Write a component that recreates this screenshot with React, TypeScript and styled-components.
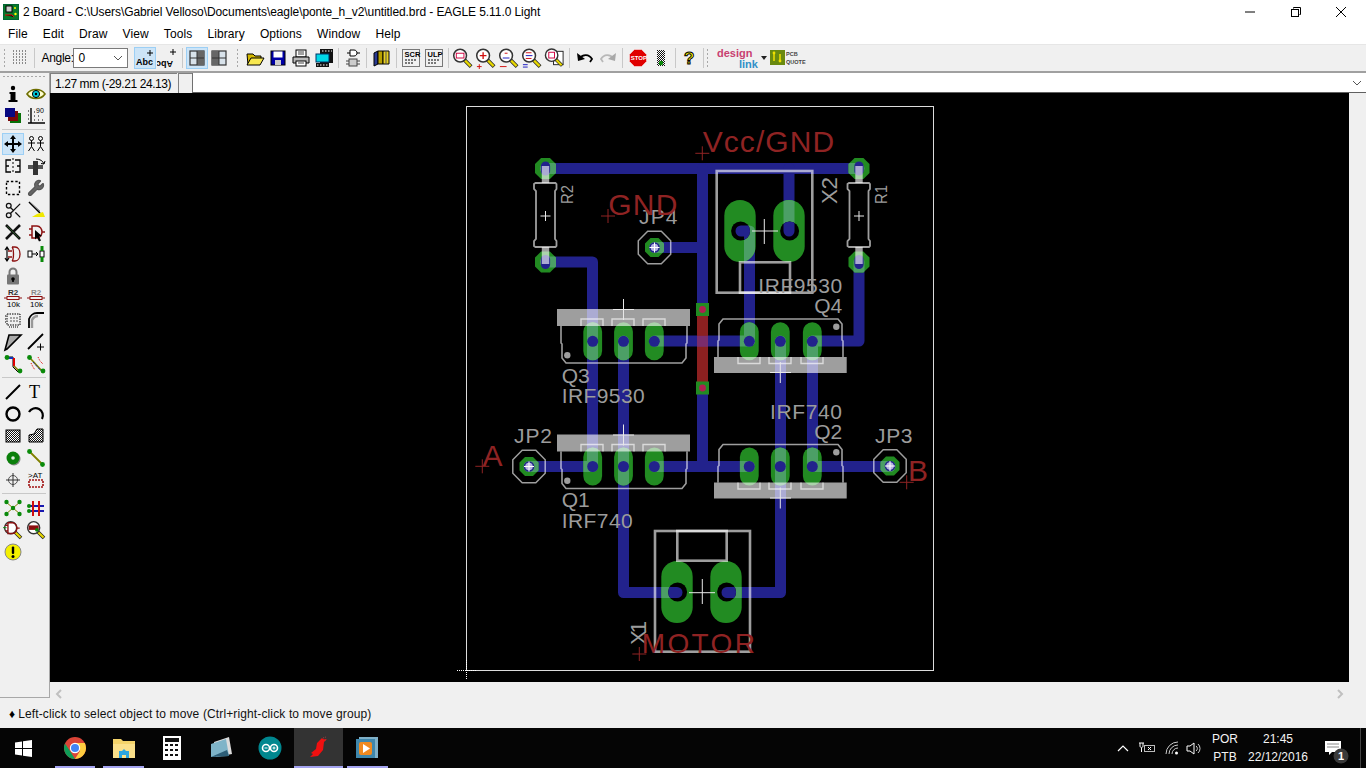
import React from 'react'
import styled, { createGlobalStyle } from 'styled-components'
import { Scissors, Wrench } from 'lucide-react'

const GlobalStyle = createGlobalStyle`
    html, body { margin: 0; padding: 0; background: #f0f0f0; overflow: hidden; }
    * { box-sizing: border-box; }
`

const UI_FONT = `"Liberation Sans", "Noto Sans", sans-serif`

const Window = styled.div`
    width: 1366px;
    height: 768px;
    display: flex;
    flex-direction: column;
    font-family: ${UI_FONT};
    font-size: 12px;
    color: #000;
    overflow: hidden;
`

const TitleBar = styled.div`
    height: 23px;
    background: #fff;
    display: flex;
    align-items: center;
    padding-left: 3px;
`

const TitleText = styled.span`
    margin-left: 4px;
    letter-spacing: -0.08px;
    white-space: nowrap;
    flex: 1;
`

const WindowControls = styled.div`
    display: flex;
    width: 122px;
    gap: 33.5px;
`

const MenuBar = styled.div`
    height: 21px;
    background: #fff;
    display: flex;
    align-items: center;
    padding-left: 8px;
    gap: 15.1px;
`

const MenuItem = styled.span`
    letter-spacing: 0.1px;
`

const Toolbar = styled.div`
    height: 29px;
    background: #f0f0f0;
    border-top: 1px solid #e6e6e6;
    border-bottom: 2px solid #a0a0a0;
    display: flex;
    align-items: center;
    padding-left: 3px;
`

const Grip = styled.div<{ $left?: number }>`
    width: 3px;
    height: 20px;
    margin-left: ${p => p.$left ?? 0}px;
    margin-right: 2px;
    background-image: radial-gradient(#a8a8a8 0.8px, transparent 1px);
    background-size: 3px 4px;
`

const ToolButton = styled.div<{ $active?: boolean; $w?: number }>`
    width: ${p => p.$w ?? 23}px;
    height: 22px;
    flex: none;
    display: flex;
    align-items: center;
    justify-content: center;
    background: ${p => (p.$active ? '#cce4f7' : 'transparent')};
    border: 1px solid ${p => (p.$active ? '#9ccff5' : 'transparent')};
`

const Sep = styled.div<{ $l?: number; $r?: number }>`
    width: 1px;
    height: 20px;
    flex: none;
    background: #c8c8c8;
    margin: 0 ${p => p.$r ?? 2.3}px 0 ${p => p.$l ?? 2.3}px;
`

const Spacer = styled.div<{ $w: number }>`
    width: ${p => p.$w}px;
    flex: none;
`

const AngleLabel = styled.span`
    width: 31px;
    letter-spacing: -0.3px;
    white-space: nowrap;
`

const Combo = styled.div`
    width: 55px;
    height: 20px;
    background: #fff;
    border: 1px solid #7a7a7a;
    display: flex;
    align-items: center;
    justify-content: space-between;
    padding: 0 4px 0 5px;
    margin-right: 6px;
`

const Workspace = styled.div`
    height: 632px;
    display: flex;
`

const Dock = styled.div`
    width: 50px;
    height: 625px;
    background: #f0f0f0;
    border-right: 1px solid #a8a8a8;
    border-bottom: 1px solid #a8a8a8;
    padding: 2px 0 0 2px;
    flex: none;
`

const DockGrip = styled.div`
    height: 3px;
    width: 44px;
    margin-bottom: 5px;
    background-image: radial-gradient(#a8a8a8 0.8px, transparent 1px);
    background-size: 4px 3px;
`

const ToolGrid = styled.div`
    display: grid;
    grid-template-columns: 22px 22px;
    grid-auto-rows: 22px;
    column-gap: 1px;
`

const DockRule = styled.div`
    height: 1px;
    width: 44px;
    background: #c8c8c8;
    margin: 2px 0 3px;
`

const Main = styled.div`
    flex: 1;
    display: flex;
    flex-direction: column;
    min-width: 0;
`

const CoordRow = styled.div`
    height: 20px;
    display: flex;
    background: #f0f0f0;
`

const CoordBox = styled.div`
    width: 127px;
    padding-left: 4px;
    display: flex;
    align-items: center;
    white-space: nowrap;
    letter-spacing: -0.42px;
    border-top: 1px solid #808080;
    border-left: 1px solid #808080;
`

const SmallBox = styled.div`
    width: 14px;
    margin-left: 1px;
    border-top: 1px solid #808080;
    border-left: 1px solid #808080;
`

const CommandField = styled.div`
    flex: 1;
    background: #fff;
    border-left: 1px solid #707070;
    border-bottom: 1px solid #606060;
    display: flex;
    align-items: center;
    justify-content: flex-end;
    padding-right: 3px;
`

const CanvasRow = styled.div`
    height: 589px;
    display: flex;
`

const Gutter = styled.div`
    width: 17px;
    background: #f0f0f0;
`

const Board = styled.svg`
    display: block;
    width: 1299px;
    height: 589px;
    background: #000;
    flex: none;
`

const HScroll = styled.div`
    height: 23px;
    width: 1299px;
    display: flex;
    justify-content: space-between;
    align-items: center;
    padding: 0 4px;
`

const StatusBar = styled.div`
    height: 23px;
    background: #f0f0f0;
    display: flex;
    align-items: center;
    padding: 0 0 5px 9px;
    gap: 3px;
`

const StatusText = styled.span`
    letter-spacing: 0.13px;
    color: #101010;
`

const Taskbar = styled.div`
    height: 40px;
    background: #050505;
    display: flex;
    align-items: center;
    color: #fff;
`

const StartButton = styled.div`
    width: 50.7px;
    height: 40px;
    display: flex;
    align-items: center;
    justify-content: center;
    padding-right: 4px;
`

const TaskIcon = styled.div<{ $open?: boolean; $active?: boolean }>`
    width: 48.7px;
    height: 40px;
    position: relative;
    display: flex;
    align-items: center;
    justify-content: center;
    background: ${p => (p.$active ? '#333' : 'transparent')};
    &::after {
        content: '';
        display: ${p => (p.$open ? 'block' : 'none')};
        position: absolute;
        left: ${p => (p.$active ? 0 : 4)}px;
        right: ${p => (p.$active ? 0 : 4)}px;
        bottom: 0;
        height: 2px;
        background: #a4a4f0;
    }
`

const Tray = styled.div`
    margin-left: auto;
    display: flex;
    align-items: center;
    height: 40px;
    padding-right: 5px;
`

const TrayIcons = styled.div`
    display: flex;
    align-items: center;
    margin-right: 6px;
`

const TrayText = styled.div<{ $w: number; $left?: number }>`
    width: ${p => p.$w}px;
    margin-left: ${p => p.$left ?? 0}px;
    display: flex;
    flex-direction: column;
    align-items: center;
    line-height: 18px;
    font-size: 12px;
    color: #f4f4f4;
`

const Notify = styled.div`
    width: 40px;
    height: 40px;
    margin-left: 8px;
    padding-top: 4px;
    border-right: 1px solid #444;
    display: flex;
    align-items: center;
`

const Label = styled.text<{ $size?: number }>`
    font-family: "Liberation Sans", sans-serif;
    font-size: ${p => p.$size ?? 21}px;
    fill: #9c9c9c;
`

const RedLabel = styled.text<{ $size?: number }>`
    font-family: "Liberation Sans", sans-serif;
    font-size: ${p => p.$size ?? 30}px;
    fill: #8f2323;
`

const IconText = styled.text<{ $size?: number; $fill?: string; $weight?: number; $serif?: boolean }>`
    font-family: ${p => (p.$serif ? '"Liberation Serif", serif' : '"Liberation Sans", sans-serif')};
    font-size: ${p => p.$size ?? 7}px;
    font-weight: ${p => p.$weight ?? 700};
    fill: ${p => p.$fill ?? '#000'};
`

const Ico = ({ children, s = 20, w }: { children: React.ReactNode; s?: number; w?: number }) => (
    <svg width={w ?? s} height={s} viewBox={`0 0 ${w ?? s} ${s}`}>{children}</svg>
)

const Checker = ({ id }: { id: string }) => (
    <defs>
        <pattern id={id} width="2" height="2" patternUnits="userSpaceOnUse">
            <rect width="2" height="2" fill="#fff" />
            <rect width="1" height="1" fill="#111" />
            <rect x="1" y="1" width="1" height="1" fill="#111" />
        </pattern>
    </defs>
)

// magnifier shared by the zoom buttons
const Mag = ({ children, s = 22 }: { children?: React.ReactNode; s?: number }) => (
    <Ico s={s}>
        <g transform={s === 22 ? '' : 'scale(0.9)'}>
            <path d="M13 13L20 20" stroke="#222" strokeWidth="4" />
            <path d="M13.5 13.5L19.5 19.5" stroke="#e8d800" strokeWidth="2.4" />
            <circle cx="8.5" cy="8.5" r="6.7" fill="#fff" stroke="#333" strokeWidth="1.6" />
            {children}
        </g>
    </Ico>
)

const Gate = ({ x = 0, y = 0, color = '#8c1010' }: { x?: number; y?: number; color?: string }) => (
    <path transform={`translate(${x} ${y})`} d="M4 3h5c3 0 5 3 5 6s-2 6-5 6H4zM1 6h3M1 12h3M14 9h3" fill="none" stroke={color} strokeWidth="1.5" />
)

const dock: React.ReactNode[][] = [
    [
        <Ico><circle cx="10" cy="4" r="2.2" /><path d="M6.5 8h6v8h2v2h-9v-2h2v-6h-1z" /></Ico>,
        <Ico><path d="M1 10C5 4 15 4 19 10 15 16 5 16 1 10z" fill="#ffffd0" stroke="#6e6e00" strokeWidth="1.6" /><circle cx="10" cy="10" r="3.6" fill="#00c8d8" stroke="#000" /><circle cx="10" cy="10" r="1.2" /></Ico>,
        <Ico><rect x="7" y="7" width="11" height="10" fill="#087008" /><rect x="5" y="5" width="10" height="10" fill="#7a0808" /><rect x="2" y="2" width="10" height="9" fill="#080880" /></Ico>,
        <Ico><path d="M5 2v15M2 17h17" stroke="#000" strokeWidth="1.4" /><path d="M8 14h2M12 14h2M16 14h2M8 10h2M12 10h2M8 6h2M2 13h2M2 9h2M2 5h2" stroke="#000" strokeDasharray="1 1" /><IconText x="10" y="7" $size={7} $weight={400}>90</IconText></Ico>,
    ],
    [
        <Ico><path d="M10 1l3 4h-2v4h4V7l4 3-4 3v-2h-4v4h2l-3 4-3-4h2v-4H5v2l-4-3 4-3v2h4V5H7z" /></Ico>,
        <Ico><g fill="none" stroke="#000"><circle cx="5.5" cy="4.5" r="2" /><path d="M5.5 6.5v6M2 9h7M2.5 17l3-4.5 3 4.5" /><circle cx="14.5" cy="4.5" r="2" /><path d="M14.5 6.5v6M11 9h7M11.5 17l3-4.5 3 4.5" /></g></Ico>,
        <Ico><path d="M8 4H3v12h5M3 10h3M12 4h5v12h-5M17 10h-3" fill="none" stroke="#000" strokeWidth="1.3" /><path d="M10 2v16" stroke="#000" strokeDasharray="2 2" /></Ico>,
        <Ico><rect x="2" y="9" width="15" height="4" fill="#555" /><rect x="7" y="5" width="5" height="14" fill="#333" /><path d="M10 3c4 0 7 2 8 5M18 8l-3-.5M18 8l1-3" fill="none" stroke="#000" strokeWidth="1" /></Ico>,
        <Ico><rect x="3.5" y="3.5" width="13" height="13" fill="none" stroke="#000" strokeWidth="1.4" strokeDasharray="2.4 2" /></Ico>,
        <Wrench size={18} fill="#666" color="#555" strokeWidth={1.6} />,
        <Scissors size={19} color="#111" strokeWidth={1.6} />,
        <Ico><path d="M3 2l11 11" stroke="#000" strokeWidth="1.6" /><path d="M4 2l10 9" stroke="#888" /><path d="M11 14l6-2 2 5H6z" fill="#f0e800" /></Ico>,
        <Ico><path d="M3 3l14 14M17 3L3 17" stroke="#101010" strokeWidth="2.6" /><path d="M4 4l12 12" stroke="#245024" /></Ico>,
        <Ico><Gate x={2} y={1} /><path d="M9 8l7 6-3 .5 2 4-2 1-2-4-2 2z" fill="#000" /></Ico>,
        <Ico><path d="M4 4v12M2 6l2-3 2 3M2 14l2 3 2-3" fill="none" stroke="#000" strokeWidth="1.2" /><path d="M9 3h3c3 0 5 3 5 7s-2 7-5 7H9M9 3c2 2 2 12 0 14M5 7h4M5 13h4" fill="none" stroke="#8c1010" strokeWidth="1.3" /></Ico>,
        <Ico><rect x="2" y="7" width="4" height="6" fill="#fff" stroke="#000" /><rect x="14" y="7" width="4" height="6" fill="#fff" stroke="#000" /><path d="M6 10h6M10 8l2 2-2 2" fill="none" stroke="#000" /><path d="M16 2v5M16 13v5" stroke="#0a8a0a" strokeWidth="3" /></Ico>,
        <Ico><path d="M6.5 9V6a3.5 3.5 0 017 0v3" fill="none" stroke="#777" strokeWidth="2" /><rect x="4" y="8.5" width="12" height="10" rx="1" fill="#777" /><circle cx="10" cy="13" r="1.8" /><rect x="9.2" y="13" width="1.6" height="3" /></Ico>,
        null,
        <Ico><IconText x="5" y="7" $size={8} $fill="#333">R2</IconText><path d="M1 10h3M16 10h3" stroke="#8c1010" /><rect x="4" y="8.5" width="12" height="3" fill="none" stroke="#8c1010" /><IconText x="4" y="19" $size={8} $weight={400}>10k</IconText></Ico>,
        <Ico><IconText x="5" y="7" $size={8} $fill="#888">R2</IconText><path d="M1 10h3M16 10h3" stroke="#8c1010" /><rect x="4" y="8.5" width="12" height="3" fill="none" stroke="#8c1010" /><IconText x="4" y="19" $size={8} $weight={400}>10k</IconText></Ico>,
        <Ico><rect x="4" y="4" width="13" height="11" fill="none" stroke="#000" strokeDasharray="1.5 1" /><path d="M2 6h2M2 9h2M2 12h2M6 17h9" stroke="#000" strokeDasharray="1 1" /><path d="M7 8h8M7 11h8" stroke="#555" strokeDasharray="2 1" /></Ico>,
        <Ico><path d="M3 18V9c1-3 4-6 8-6h7" fill="none" stroke="#000" strokeWidth="1.8" /><path d="M6 18V10c1-2 3-4 6-4" fill="none" stroke="#999" strokeWidth="2.4" /></Ico>,
    ],
    [
        <Ico><path d="M2 18L6 3h12L4 17z" fill="#aaa" stroke="#000" strokeWidth="1.6" /></Ico>,
        <Ico><path d="M2 17L17 2" stroke="#000" strokeWidth="1.8" /><path d="M11 15h7M14.5 11.5v7" stroke="#000" /></Ico>,
    ],
    [
        <Ico><path d="M4 3h6v10l5 5" fill="none" stroke="#000" /><path d="M4 4h6" stroke="#1030c0" strokeWidth="2" /><path d="M11 4v8" stroke="#e00000" strokeWidth="2" /><path d="M11 12l5 5" stroke="#808000" strokeWidth="1.6" /><circle cx="4" cy="3.5" r="2.4" fill="#0a8a0a" /><circle cx="17" cy="17" r="2.4" fill="#0a8a0a" /></Ico>,
        <Ico><path d="M4 4l12 13" stroke="#808000" strokeWidth="1.6" /><path d="M5 9l2 4 2 3M12 3l2 4 3 3" stroke="#e00000" strokeDasharray="1 1" fill="none" /><path d="M7 8l8 9" stroke="#0000c0" strokeDasharray="1 1" /><circle cx="3.5" cy="3.5" r="2.4" fill="#0a8a0a" /><circle cx="17" cy="17" r="2.4" fill="#0a8a0a" /></Ico>,
    ],
    [
        <Ico><path d="M3 17L17 3" stroke="#000" strokeWidth="2" /></Ico>,
        <Ico><IconText x="3" y="16" $size={18} $weight={400} $serif>T</IconText></Ico>,
        <Ico><circle cx="10" cy="10" r="6.5" fill="none" stroke="#000" strokeWidth="2.4" /></Ico>,
        <Ico><path d="M3 8a7 7 0 1113 7" fill="none" stroke="#000" strokeWidth="2.2" /></Ico>,
        <Ico><Checker id="hatch-a" /><rect x="3" y="4" width="14" height="12" fill="url(#hatch-a)" stroke="#000" /></Ico>,
        <Ico><Checker id="hatch-b" /><path d="M3 16V9l5-1 3-5h6v13z" fill="url(#hatch-b)" stroke="#000" /></Ico>,
        <Ico><circle cx="11" cy="11" r="6.5" fill="#888" /><circle cx="10" cy="10" r="6.5" fill="#0a7f0a" /><circle cx="10" cy="10" r="1.8" fill="#ddeedd" /></Ico>,
        <Ico><path d="M4 4l12 12" stroke="#808000" strokeWidth="1.8" /><circle cx="3.5" cy="3.5" r="2.4" fill="#0a8a0a" /><circle cx="16.5" cy="16.5" r="2.4" fill="#0a8a0a" /></Ico>,
        <Ico><circle cx="10" cy="10" r="4.5" fill="none" stroke="#555" /><path d="M10 3v14M3 10h14" stroke="#333" /></Ico>,
        <Ico><IconText x="2" y="8" $size={8} $weight={400}>&gt;AT</IconText><rect x="3" y="10" width="14" height="7" fill="none" stroke="#a01010" strokeWidth="1.6" strokeDasharray="2 1" /></Ico>,
    ],
    [
        <Ico><path d="M3 4l14 12M17 4L3 16" stroke="#808000" /><circle cx="3.5" cy="4" r="2.2" fill="#0a8a0a" /><circle cx="16.5" cy="4" r="2.2" fill="#0a8a0a" /><circle cx="3.5" cy="16" r="2.2" fill="#0a8a0a" /><circle cx="16.5" cy="16" r="2.2" fill="#0a8a0a" /><circle cx="10" cy="10" r="2.2" fill="#0a8a0a" /></Ico>,
        <Ico><path d="M2 8h16M2 13h16" stroke="#1818b0" strokeWidth="2" /><path d="M7 3v15M13 3v15" stroke="#d01010" strokeWidth="2" /><circle cx="3" cy="8" r="2" fill="#0a8a0a" /><circle cx="3" cy="13" r="2" fill="#0a8a0a" /></Ico>,
        <Mag s={20}><Gate x={1.5} y={0} /><path d="M0 8.5h4" stroke="#0a8a0a" /></Mag>,
        <Mag s={20}><rect x="3" y="6" width="11" height="5" fill="#8c1010" /><circle cx="12" cy="11" r="2" fill="#0a8a0a" /></Mag>,
        <Ico><circle cx="10" cy="10" r="8" fill="#f4f000" stroke="#888" /><rect x="8.8" y="4.5" width="2.4" height="7.5" rx="1" /><circle cx="10" cy="14.5" r="1.5" /></Ico>,
        null,
    ],
]

const Layout = ({ flip }: { flip?: boolean }) => (
    <Ico s={18}>
        <rect x="2" y="2" width="14" height="14" fill="#d8e2ea" stroke="#333" strokeWidth="1.2" />
        <rect x={flip ? 2 : 9} y="2" width="7" height="14" fill="#666" />
        <path d="M9 2v14M2 9h14" stroke="#333" />
    </Ico>
)

const Trace = ({ color }: { color: string }) => (
    <g fill="none" stroke={color} strokeWidth="11" strokeLinecap="round" strokeLinejoin="round">
        {TRACES.map(d => <path key={d} d={d} />)}
    </g>
)

const TRACES = [
    'M545.5 168.5H859',
    'M702.5 168.5V309.5',
    'M702.5 388V466.5',
    'M654.5 247.5H702.5',
    'M545.5 262H592.5V466.5',
    'M623.5 341V592.5H677',
    'M780.5 341V592.5H727',
    'M812.5 341V466.5',
    'M654.5 341H749.5',
    'M812.5 341H859V262',
    'M529 466.5H592.5',
    'M654.5 466.5H749.5',
    'M812.5 466.5H890',
    'M789 168.5V231',
    'M749.5 341V231H741',
]

const octagon = (cx: number, cy: number, r: number) => {
    const k = r * 0.42
    return [[-k, -r], [k, -r], [r, -k], [r, k], [k, r], [-k, r], [-r, k], [-r, -k]]
        .map(([x, y]) => `${cx + x},${cy + y}`).join(' ')
}

const RES_PADS = [[545.5, 168.5], [545.5, 262], [859, 168.5], [859, 262]]
const JP_PADS = [[654.5, 247.5], [529, 466.5], [890, 466]]
const PIN_X = [592.7, 623.5, 654.3, 749.3, 780.3, 812.3]
const PIN_Y = [341.3, 466.5]
const TERMINALS = [[740, 231], [789, 231], [677, 592], [726, 592]]
const VIAS = [309.5, 388]

const PadShapes = () => (
    <>
        {RES_PADS.map(([x, y]) => <polygon key={`${x}${y}`} points={octagon(x, y, 10.5)} />)}
        {JP_PADS.map(([x, y]) => <polygon key={`${x}${y}`} points={octagon(x, y, 9.5)} />)}
        {PIN_Y.map(y => PIN_X.map(x => <rect key={`${x}${y}`} x={x - 9.4} y={y - 19} width="18.8" height="38" rx="9.4" />))}
        {TERMINALS.map(([x, y]) => <rect key={`${x}${y}`} x={x - 15.7} y={y - 31} width="31.4" height="62" rx="15.7" />)}
    </>
)

const PACKAGE = 'rgba(255,255,255,0.62)'

const Mosfet = ({ dy, flipped }: { dy: number; flipped?: boolean }) => (
    <g transform={`translate(0 ${dy})`}>
        {flipped ? (
            <>
                <rect x="714" y="357" width="132.7" height="16" fill={PACKAGE} />
                <path d="M718 357V341l1-1V324l4-5H838l4 5V340l1 1V357" fill="none" stroke={PACKAGE} strokeWidth="1.6" />
                {[738, 769, 801].map(x => <path key={x} d={`M${x} 357v6.5h22V357`} fill="none" stroke={PACKAGE} strokeWidth="1.4" />)}
                <circle cx="836.3" cy="326.7" r="3.2" fill={PACKAGE} />
                <path d="M770 372.5h21M780.3 362v21" stroke="#e8e8e8" />
            </>
        ) : (
            <>
                <rect x="557" y="309" width="133" height="17" fill={PACKAGE} />
                <path d="M561 326V343l1 1V358l4 5H682l4-5V344l1-1V326" fill="none" stroke={PACKAGE} strokeWidth="1.6" />
                {[581, 612, 643].map(x => <path key={x} d={`M${x} 326v-7h22v7`} fill="none" stroke={PACKAGE} strokeWidth="1.4" />)}
                <circle cx="567.3" cy="355.3" r="3.2" fill={PACKAGE} />
                <path d="M613 309.5h21M623.5 299v21" stroke="#e8e8e8" />
            </>
        )}
    </g>
)

const Resistor = ({ x }: { x: number }) => (
    <g>
        <path d={`M${x - 3.7} 166h7.4v17h-7.4zM${x - 3.7} 247h7.4v17h-7.4z`} fill={PACKAGE} />
        <path
            d={`M${x - 10} 183h20l1 1v5l-1.5 2v48l1.5 2v5l-1 1h-20l-1.5-1v-5l2-2v-48l-2-2v-5z`}
            fill="none"
            stroke={PACKAGE}
            strokeWidth="1.8"
        />
        <path d={`M${x - 5} 216h10M${x} 211v10`} stroke="#e8e8e8" />
    </g>
)

const Header = ({ x, y }: { x: number; y: number }) => (
    <g>
        <polygon points={octagon(x, y, 16.2)} fill="none" stroke={PACKAGE} strokeWidth="1.5" />
        <circle cx={x} cy={y} r="5.3" fill="#22228c" />
        <circle cx={x} cy={y} r="3.8" fill="#b4b4e0" />
        <path d={`M${x - 5} ${y}h10M${x} ${y - 5}v10`} stroke="#fff" />
    </g>
)

const RedCross = ({ x, y }: { x: number; y: number }) => (
    <path d={`M${x - 7} ${y}h14M${x} ${y - 7}v14`} stroke="#8f2323" />
)

const BoardDrawing = () => (
    <Board viewBox="50 93 1299 589">
        <defs>
            <clipPath id="pad-clip"><PadShapes /></clipPath>
            <clipPath id="hole-clip">
                {TERMINALS.map(([x, y]) => <circle key={`${x}${y}`} cx={x + 0.6} cy={y} r="9.5" />)}
            </clipPath>
        </defs>

        <rect x="466.5" y="106.5" width="467" height="564" fill="none" stroke="#dcdcdc" />
        <path d="M466.5 660v20M457 670.5h20" stroke="#fff" strokeDasharray="1 1" />

        <Trace color="#22228c" />
        <rect x="697" y="309.5" width="11" height="78.5" fill="#8c2020" />
        <rect x="697" y="335.8" width="11" height="11" fill="#7b2c6c" />

        <g fill="#228b22"><PadShapes /></g>
        <g clipPath="url(#pad-clip)"><Trace color="#4c9f66" /></g>

        {VIAS.map(y => (
            <g key={y}>
                <rect x="696" y={y - 6.5} width="13" height="13" fill="#228b22" />
                <circle cx="702.5" cy={y} r="3.4" fill="#b02050" />
            </g>
        ))}

        {TERMINALS.map(([x, y]) => <circle key={`${x}${y}`} cx={x + 0.6} cy={y} r="9.5" fill="#000" />)}
        <g clipPath="url(#hole-clip)"><Trace color="#22228c" /></g>
        {PIN_Y.map(y => PIN_X.map(x => <circle key={`${x}${y}`} cx={x} cy={y} r="5.5" fill="#22228c" />))}
        {RES_PADS.map(([x, y]) => <rect key={`${x}${y}`} x={x - 4.6} y={y - 7} width="9.2" height="14" rx="4.6" fill="#22228c" />)}

        <Resistor x={545.5} />
        <Resistor x={859} />
        {JP_PADS.map(([x, y]) => <Header key={x} x={x} y={y} />)}

        <Mosfet dy={0} />
        <Mosfet dy={125.5} />
        <Mosfet dy={0} flipped />
        <Mosfet dy={125.5} flipped />

        <g fill="none" stroke={PACKAGE} strokeWidth="2.6">
            <rect x="716.7" y="171" width="95.6" height="121.7" />
            <rect x="740" y="262.3" width="50" height="30.4" />
            <rect x="655" y="531" width="95" height="120.7" />
            <rect x="677.3" y="531" width="49.4" height="29.7" />
        </g>
        <path d="M752 231h26M764.3 219v25M689 592.7h26M702.3 579v25" stroke="#e8e8e8" />

        <Label x="561.7" y="383" textLength="28">Q3</Label>
        <Label x="561.7" y="402.7" textLength="83">IRF9530</Label>
        <Label x="561.7" y="507.3" textLength="28">Q1</Label>
        <Label x="561.7" y="528.3" textLength="71">IRF740</Label>
        <Label x="514" y="443.3" textLength="38">JP2</Label>
        <Label x="639" y="224" textLength="38.5">JP4</Label>
        <Label x="875" y="443.3" textLength="37.5">JP3</Label>
        <Label x="758.3" y="292.7" textLength="84">IRF9530</Label>
        <Label x="814.3" y="312.7" textLength="28">Q4</Label>
        <Label x="770" y="419.3" textLength="72">IRF740</Label>
        <Label x="814.3" y="439" textLength="28">Q2</Label>
        <Label $size={16.5} transform="rotate(-90 573 204)" x="573" y="204" textLength="19" lengthAdjust="spacingAndGlyphs">R2</Label>
        <Label $size={16.5} transform="rotate(-90 886.7 204)" x="886.7" y="204" textLength="19" lengthAdjust="spacingAndGlyphs">R1</Label>
        <Label $size={22.5} transform="rotate(-90 836.5 204)" x="836.5" y="204" textLength="27">X2</Label>
        <Label $size={22.5} transform="rotate(-90 646 645)" x="646" y="645" textLength="24">X1</Label>

        <RedLabel x="702.7" y="152.3" textLength="131.5">Vcc/GND</RedLabel>
        <RedCross x={702.3} y={153.3} />
        <RedLabel x="608.3" y="214.7" textLength="69">GND</RedLabel>
        <RedCross x={608} y={216} />
        <RedLabel x="482.5" y="465.7" textLength="20">A</RedLabel>
        <RedCross x={482.3} y={466.3} />
        <RedLabel x="908" y="481" textLength="19">B</RedLabel>
        <RedCross x={906.7} y={482.3} />
        <RedLabel x="641.7" y="652.7" textLength="113.3" $size={28}>MOTOR</RedLabel>
        <RedCross x={639.3} y={654} />
    </Board>
)

export default function App() {
    return (
        <Window>
            <GlobalStyle />
            <TitleBar>
                <Ico s={16}>
                    <rect x="0.5" y="0.5" width="15" height="15" fill="#0a7a2a" stroke="#063" />
                    <rect x="3" y="2" width="6" height="6" fill="#ccc" stroke="#000" />
                    <circle cx="12" cy="4" r="1" fill="#ff0" />
                    <path d="M2 11h7l2 2" stroke="#e00" />
                    <circle cx="12.5" cy="10" r="1.2" fill="#ff0" />
                </Ico>
                <TitleText>2 Board - C:\Users\Gabriel Velloso\Documents\eagle\ponte_h_v2\untitled.brd - EAGLE 5.11.0 Light</TitleText>
                <WindowControls>
                    <Ico s={12}><path d="M1 6h10" stroke="#000" /></Ico>
                    <Ico s={12}><path d="M3.5 2.5v-1h7v7h-1" fill="none" stroke="#000" /><rect x="1.5" y="3.5" width="7" height="7" fill="none" stroke="#000" /></Ico>
                    <Ico s={12}><path d="M1 1l10 10M11 1L1 11" stroke="#000" /></Ico>
                </WindowControls>
            </TitleBar>

            <MenuBar>
                {['File', 'Edit', 'Draw', 'View', 'Tools', 'Library', 'Options', 'Window', 'Help'].map(m => (
                    <MenuItem key={m}>{m}</MenuItem>
                ))}
            </MenuBar>

            <Toolbar>
                <Grip />
                <ToolButton>
                    <Ico s={16}>
                        {[1, 4, 7, 10, 13].map(y => (
                            <path key={y} d={`M1 ${y}h14`} stroke="#222" strokeDasharray="1 2" />
                        ))}
                    </Ico>
                </ToolButton>
                <Sep $l={3} $r={6.5} />
                <AngleLabel>Angle:</AngleLabel>
                <Combo>
                    <span>0</span>
                    <Ico s={10}><path d="M1 3l4 4 4-4" fill="none" stroke="#555" /></Ico>
                </Combo>
                <ToolButton $active $w={22}>
                    <Ico s={20}>
                        <IconText x="1" y="17" $size={9}>Abc</IconText>
                        <path d="M12 5h6M15 2v6" stroke="#000" />
                    </Ico>
                </ToolButton>
                <ToolButton $w={23}>
                    <Ico s={20}>
                        <IconText transform="rotate(180 8 10)" x="0" y="7" $size={9}>Abc</IconText>
                        <path d="M13 4h6M16 1v6" stroke="#000" />
                    </Ico>
                </ToolButton>
                <Sep $l={3} $r={3} />
                <ToolButton $active $w={22}><Layout /></ToolButton>
                <ToolButton $w={23}><Layout flip /></ToolButton>
                <Grip $left={5} />
                <Spacer $w={3} />
                <ToolButton>
                    <Ico>
                        <path d="M2 6h6l2 2h6v3H6l-3 6z" fill="#d4b800" stroke="#000" />
                        <path d="M6 10h13l-4 7H2z" fill="#f8e850" stroke="#000" />
                    </Ico>
                </ToolButton>
                <ToolButton>
                    <Ico>
                        <rect x="3" y="3" width="14" height="14" fill="#0000a8" stroke="#000" />
                        <rect x="5.5" y="3.5" width="9" height="6" fill="#fff" />
                        <rect x="7" y="12" width="6" height="5" fill="#ccc" />
                    </Ico>
                </ToolButton>
                <ToolButton>
                    <Ico>
                        <rect x="5" y="2" width="10" height="7" fill="#fff" stroke="#000" />
                        <path d="M2 9h16v6H2z" fill="#bbb" stroke="#000" />
                        <rect x="5" y="13" width="10" height="5" fill="#fff" stroke="#000" />
                        <path d="M7 4h6M7 6h6M7 15h6" stroke="#444" />
                    </Ico>
                </ToolButton>
                <ToolButton>
                    <Ico>
                        <rect x="6" y="1" width="13" height="14" fill="#111" />
                        <rect x="2" y="6" width="13" height="8" fill="#00d8e8" stroke="#036" />
                        <rect x="2" y="15" width="13" height="4" fill="#111" />
                        <path d="M8 3h10M3 17h11" stroke="#fff" strokeDasharray="1.5 1.5" />
                    </Ico>
                </ToolButton>
                <Sep />
                <ToolButton>
                    <Ico>
                        <path d="M7 2v6h4c2 0 3-1.5 3-3s-1-3-3-3zM4 5h3M14 5h3" fill="#fff" stroke="#000" />
                        <rect x="6" y="11" width="8" height="7" fill="#ccc" stroke="#444" />
                        <path d="M3 13h3M3 16h3M14 13h3M14 16h3" stroke="#444" />
                    </Ico>
                </ToolButton>
                <Sep />
                <ToolButton>
                    <Ico>
                        <path d="M3 5l4-2v13l-4 2z" fill="#2a3a90" stroke="#000" />
                        <path d="M7 3h5v13H7z" fill="#b8a000" stroke="#000" />
                        <path d="M12 3h6v13h-6z" fill="#e8d020" stroke="#000" />
                        <path d="M15 3v13" stroke="#555" />
                    </Ico>
                </ToolButton>
                <Sep $r={2.8} $l={3.2} />
                <ToolButton>
                    <Ico>
                        <rect x="1.5" y="1.5" width="17" height="17" fill="none" stroke="#000" strokeDasharray="1 1" />
                        <IconText x="3.5" y="9" $size={7.5}>SCR</IconText>
                        <path d="M4 12h12M4 15h8" stroke="#000" strokeDasharray="2 1" />
                    </Ico>
                </ToolButton>
                <ToolButton>
                    <Ico>
                        <rect x="1.5" y="1.5" width="17" height="17" fill="none" stroke="#000" strokeDasharray="1 1" />
                        <IconText x="3.5" y="9" $size={7.5}>ULP</IconText>
                        <path d="M4 12h12M4 15h8" stroke="#000" strokeDasharray="2 1" />
                    </Ico>
                </ToolButton>
                <Sep />
                <ToolButton><Mag><rect x="4.5" y="6" width="8" height="5" fill="none" stroke="#d00040" /></Mag></ToolButton>
                <ToolButton><Mag><path d="M5 8.5h7M8.5 5v7" stroke="#d01010" strokeWidth="1.4" /><path d="M2 20h5M4.5 17.5v5" stroke="#d01010" /></Mag></ToolButton>
                <ToolButton><Mag><path d="M7 6h3" stroke="#d01010" /><path d="M5 11h7" stroke="#1818c0" /><path d="M2 20h7" stroke="#d01010" /></Mag></ToolButton>
                <ToolButton><Mag><path d="M5 5.5h6" stroke="#d01010" /><path d="M5 8.5h7" stroke="#1818c0" /><path d="M5 11.5h6" stroke="#d01010" /><path d="M2 18h5M2 20.5h5" stroke="#1818c0" /></Mag></ToolButton>
                <ToolButton>
                    <Ico s={22}>
                        <rect x="10" y="4" width="10" height="14" fill="#fff" stroke="#222" />
                        <path d="M12 12l7 7" stroke="#222" strokeWidth="3.6" />
                        <path d="M12.5 12.5l6 6" stroke="#e8d800" strokeWidth="2.2" />
                        <circle cx="8" cy="8" r="6.5" fill="#fff" stroke="#333" strokeWidth="1.5" />
                        <rect x="5" y="5" width="6" height="6" fill="none" stroke="#d00040" />
                    </Ico>
                </ToolButton>
                <Sep $l={3} $r={3} />
                <ToolButton>
                    <Ico>
                        <path d="M5 10c3-4 9-4 12 1l-2 3" fill="none" stroke="#000" strokeWidth="1.8" />
                        <path d="M2 5l1 8 7-2z" fill="#000" />
                    </Ico>
                </ToolButton>
                <ToolButton>
                    <Ico>
                        <path d="M15 10c-3-4-9-4-12 1l2 3" fill="none" stroke="#b8b8b8" strokeWidth="1.8" />
                        <path d="M18 5l-1 8-7-2z" fill="#a8a8a8" />
                    </Ico>
                </ToolButton>
                <Sep $l={3} $r={3} />
                <ToolButton>
                    <Ico s={20}>
                        <polygon points={octagon(10, 10, 8.5)} fill="#e00000" stroke="#fff" strokeWidth="0.5" />
                        <IconText x="2.8" y="12" $size={6} $fill="#fff">STOP</IconText>
                    </Ico>
                </ToolButton>
                <ToolButton>
                    <Ico>
                        <Checker id="hatch-c" />
                        <rect x="6" y="2" width="8" height="16" fill="url(#hatch-c)" />
                        <circle cx="10" cy="15" r="2.2" fill="#0a8a0a" />
                    </Ico>
                </ToolButton>
                <Sep />
                <ToolButton>
                    <Ico>
                        <IconText x="5" y="16" $size={17} $fill="#f8f000" stroke="#000" strokeWidth="1">?</IconText>
                    </Ico>
                </ToolButton>
                <Sep $l={2} $r={2} />
                <Grip />
                <Spacer $w={6} />
                <Ico s={22} w={42}>
                    <IconText x="0" y="10" $size={11} $fill="#c84070">design</IconText>
                    <IconText x="22" y="21" $size={11} $fill="#3090c8">link</IconText>
                </Ico>
                <Spacer $w={1} />
                <Ico s={8}><path d="M1 2h6L4 6z" fill="#222" /></Ico>
                <Spacer $w={2} />
                <Ico s={18} w={36}>
                    <rect x="0" y="1" width="15" height="15" fill="#6a8a10" />
                    <path d="M4 4v8M10 5v7" stroke="#f0e000" strokeWidth="1.5" />
                    <circle cx="4" cy="4" r="1.4" fill="#f0e000" />
                    <circle cx="10" cy="12" r="1.4" fill="#f0e000" />
                    <IconText x="16" y="7" $size={5.5} $fill="#444">PCB</IconText>
                    <IconText x="16" y="15" $size={5.5} $fill="#444">QUOTE</IconText>
                </Ico>
            </Toolbar>

            <Workspace>
                <Dock>
                    <DockGrip />
                    <ToolGrid>
                        {dock[0].map((ic, i) => <ToolButton key={i} $w={22}>{ic}</ToolButton>)}
                    </ToolGrid>
                    <DockRule />
                    <ToolGrid>
                        {dock[1].map((ic, i) => <ToolButton key={i} $w={22} $active={i === 0}>{ic}</ToolButton>)}
                        {dock[2].map((ic, i) => <ToolButton key={i} $w={22}>{ic}</ToolButton>)}
                        {dock[3].map((ic, i) => <ToolButton key={i} $w={22}>{ic}</ToolButton>)}
                    </ToolGrid>
                    <DockRule />
                    <ToolGrid>
                        {dock[4].map((ic, i) => <ToolButton key={i} $w={22}>{ic}</ToolButton>)}
                    </ToolGrid>
                    <DockRule />
                    <ToolGrid>
                        {dock[5].map((ic, i) => <ToolButton key={i} $w={22}>{ic}</ToolButton>)}
                    </ToolGrid>
                </Dock>
                <Main>
                    <CoordRow>
                        <CoordBox>1.27 mm (-29.21 24.13)</CoordBox>
                        <SmallBox />
                        <CommandField>
                            <Ico s={12}><path d="M2 4l4 4 4-4" fill="none" stroke="#555" /></Ico>
                        </CommandField>
                    </CoordRow>
                    <CanvasRow>
                        <BoardDrawing />
                        <Gutter />
                    </CanvasRow>
                    <HScroll>
                        <Ico s={10}><path d="M7 1L3 5l4 4" fill="none" stroke="#c0c0c0" strokeWidth="2" /></Ico>
                        <Ico s={10}><path d="M3 1l4 4-4 4" fill="none" stroke="#c0c0c0" strokeWidth="2" /></Ico>
                    </HScroll>
                </Main>
            </Workspace>

            <StatusBar>
                <span>♦</span>
                <StatusText>Left-click to select object to move (Ctrl+right-click to move group)</StatusText>
            </StatusBar>

            <Taskbar>
                <StartButton>
                    <Ico s={17}>
                        <path d="M0 2.5l7-1v6.5H0zM8 1.3l9-1.3v8H8zM0 9h7v6.5l-7-1zM8 9h9v8l-9-1.3z" fill="#fff" />
                    </Ico>
                </StartButton>
                <TaskIcon $open>
                    <Ico s={24}>
                        <circle cx="12" cy="12" r="11" fill="#db4437" />
                        <path d="M12 7h9.8A11 11 0 0112 23l5-8z" fill="#ffcd40" />
                        <path d="M2 7.5L7 15l5 8A11 11 0 012 7.5z" fill="#0f9d58" />
                        <circle cx="12" cy="12" r="5.2" fill="#fff" />
                        <circle cx="12" cy="12" r="4" fill="#4285f4" />
                    </Ico>
                </TaskIcon>
                <TaskIcon $open>
                    <Ico s={24}>
                        <path d="M1 3h8l2 2h12v17H1z" fill="#f4d36a" />
                        <rect x="1" y="8" width="22" height="14" fill="#fbe08a" />
                        <path d="M7 22v-7h3l2-2 2 2h3v7h-3v-3h-4v3z" fill="#2da5e0" />
                    </Ico>
                </TaskIcon>
                <TaskIcon>
                    <Ico s={24}>
                        <rect x="3" y="0" width="18" height="24" fill="#fff" />
                        <rect x="5" y="2" width="14" height="4" fill="#111" />
                        {[8, 13, 18].map(y => (
                            <path key={y} d={`M5 ${y + 1}h14`} stroke="#111" strokeWidth="2" strokeDasharray="3 2" />
                        ))}
                    </Ico>
                </TaskIcon>
                <TaskIcon>
                    <Ico s={24}>
                        <path d="M5 6L20 1l3 17-16 3z" fill="#dcdcdc" />
                        <path d="M2 8L17 3l3 17-18 1z" fill="#7fb4c8" />
                        <path d="M2 21l18-1-2-6z" fill="#2e5f78" />
                    </Ico>
                </TaskIcon>
                <TaskIcon>
                    <Ico s={24}>
                        <circle cx="12" cy="12" r="11.5" fill="#00878f" />
                        <circle cx="8" cy="12" r="3.5" fill="none" stroke="#fff" strokeWidth="1.6" />
                        <circle cx="16" cy="12" r="3.5" fill="none" stroke="#fff" strokeWidth="1.6" />
                        <path d="M6.5 12h3M14.5 12h3M16 10.5v3" stroke="#fff" />
                    </Ico>
                </TaskIcon>
                <TaskIcon $open $active>
                    <Ico s={24}>
                        <path d="M16 2c1 2 4 1 5 1l-3 3-1 8-5 6-8 1 3-3-2-1 5-4 1-6z" fill="#f01010" />
                        <path d="M17 2l3-1M19 4l2 0" stroke="#a04040" strokeDasharray="1 1" />
                    </Ico>
                </TaskIcon>
                <TaskIcon $open>
                    <Ico s={24}>
                        <rect x="4" y="1" width="19" height="21" fill="#7fb0c8" />
                        <rect x="1" y="3" width="19" height="19" fill="#3f87ac" />
                        <rect x="4" y="6" width="13" height="13" rx="2" fill="#f08a20" />
                        <path d="M8 8l7 4.5L8 17z" fill="#fff" />
                    </Ico>
                </TaskIcon>
                <Tray>
                    <TrayIcons>
                        <Ico s={14}><path d="M2 10l5-5 5 5" fill="none" stroke="#fff" strokeWidth="1.2" /></Ico>
                        <Spacer $w={8} />
                        <Ico s={16} w={18}>
                            <path d="M1 3h5M2 3v3c0 2 3 2 3 0V3M3.5 8v4" fill="none" stroke="#fff" />
                            <rect x="6.5" y="5.5" width="10" height="6" fill="none" stroke="#bbb" />
                            <path d="M10 7l3 3M13 7l-3 3" stroke="#fff" />
                        </Ico>
                        <Spacer $w={8} />
                        <Ico s={16}>
                            <path d="M2 14a12 12 0 0112-12M5 14a9 9 0 019-9M8 14a6 6 0 016-6" fill="none" stroke="#ccc" />
                            <circle cx="12.5" cy="13" r="1.5" fill="#fff" />
                        </Ico>
                        <Spacer $w={6} />
                        <Ico s={16} w={18}>
                            <path d="M1 6h3l4-3v11L4 11H1z" fill="none" stroke="#fff" />
                            <path d="M10 6a3 3 0 010 5M12 4a6 6 0 010 9" fill="none" stroke="#ccc" />
                        </Ico>
                    </TrayIcons>
                    <TrayText $w={30}><span>POR</span><span>PTB</span></TrayText>
                    <TrayText $w={70} $left={3}><span>21:45</span><span>22/12/2016</span></TrayText>
                    <Notify>
                        <Ico s={30}>
                            <path d="M4 6h16v11h-9l-3 3v-3H4z" fill="#fff" />
                            <path d="M6 9h12M6 12h12" stroke="#888" />
                            <circle cx="20" cy="21" r="7.5" fill="#3a3a3a" />
                            <IconText x="17" y="25" $size={11} $fill="#fff">1</IconText>
                        </Ico>
                    </Notify>
                </Tray>
            </Taskbar>
        </Window>
    )
}
